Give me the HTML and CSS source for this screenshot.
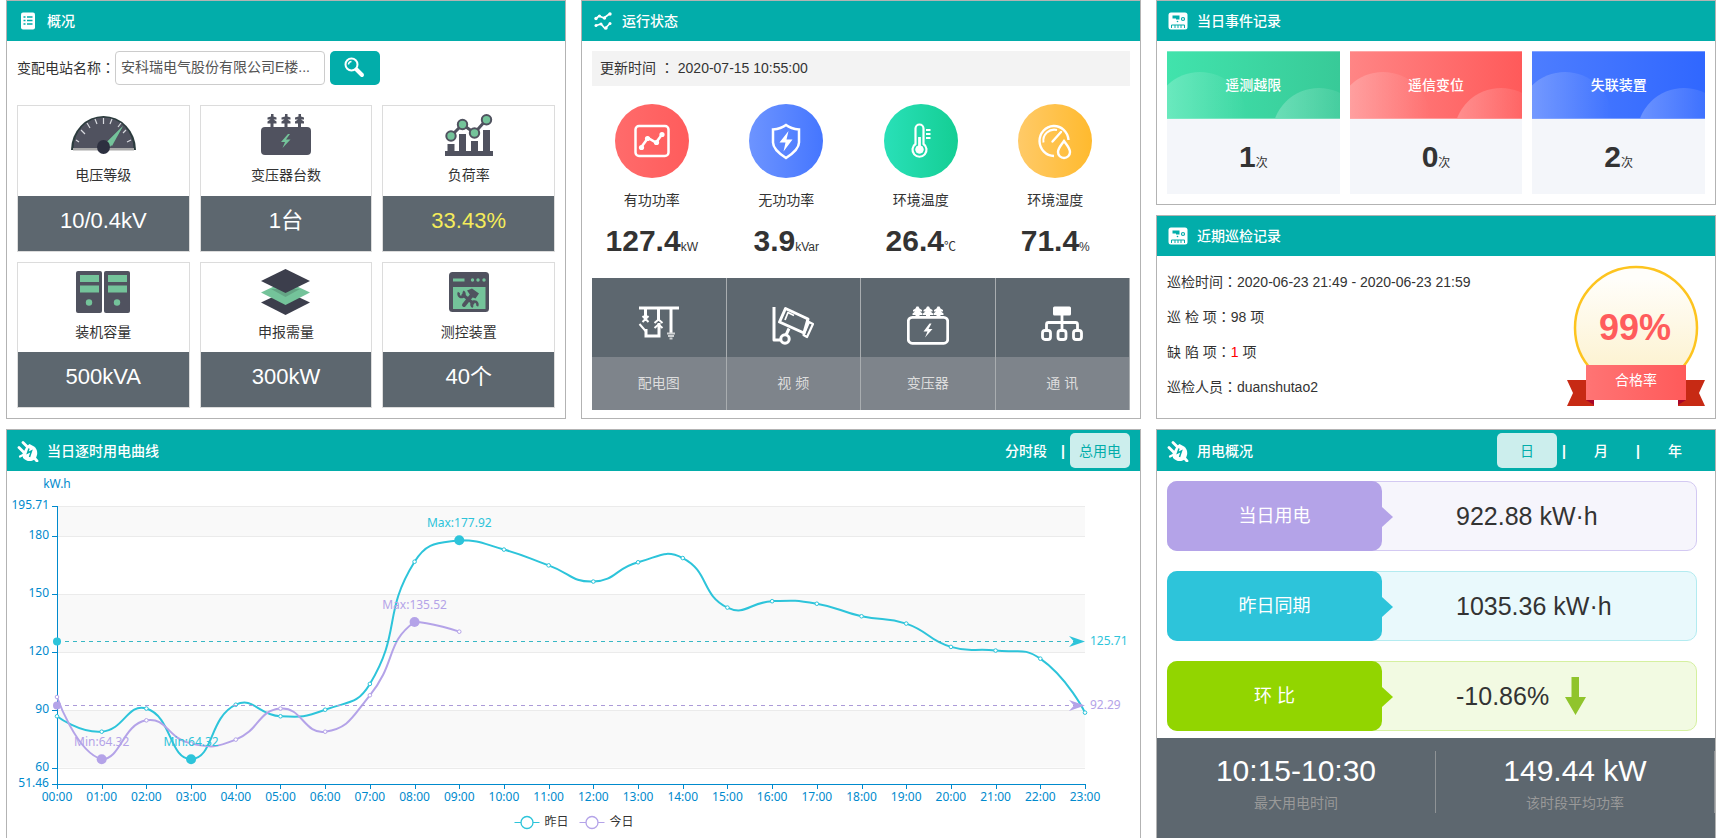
FILE: index.html
```html
<!DOCTYPE html>
<html lang="zh-CN">
<head>
<meta charset="utf-8">
<title>变配电站运行监控</title>
<link rel="stylesheet" href="styles.css">
</head>
<body>
<svg class="defs" width="0" height="0" aria-hidden="true">
  <symbol id="i-plug" viewBox="0 0 22 22">
    <g fill="none" stroke="#fff" stroke-linecap="round" stroke-width="2.800">
      <path d="M6 2.500l6.500 6.500M2 7.500l6.500 6.500M17 17.500l3 3.500"/>
      <path d="M3 16.500l4-2" stroke-width="2.200"/>
    </g>
    <path d="M9.500 6.500l3-2.500 4.500 2.500c4 3 4 8 1.500 12-4 4-9 3-12.500-.500l-.500-4z" fill="#fff"/>
    <path d="M12 8.500l-1.500 4.500 4-2-2 6" stroke="#02adaa" stroke-width="1.500" fill="none"/>
  </symbol>
  <symbol id="i-meter" viewBox="0 0 22 22">
    <rect x="1.500" y="2.500" width="19" height="17" rx="2.500" fill="#fff"/>
    <path d="M5.500 5.500h7v4h-3.500v-1h-3.500z" fill="#02adaa"/>
    <circle cx="16" cy="9" r="1.500" fill="none" stroke="#02adaa" stroke-width="1.200"/>
    <circle cx="10.500" cy="11.500" r=".8" fill="#02adaa"/>
    <path d="M4.500 18v-3h13v3M8 15v3M11 15v3M14 15v3" stroke="#02adaa" stroke-width="1" fill="none"/>
  </symbol>
</svg>

<main class="board">
  <section class="panel">
    <header class="bar">
      <svg class="bar-icon" viewBox="0 0 22 22"><rect x="4" y="2.500" width="14" height="17" rx="2" fill="#fff"/><path d="M6.500 7h2M6.500 10.500h2M6.500 14h2M10 7h5.500M10 10.500h5.500M10 14h5.500" stroke="#02adaa" stroke-width="1.500"/></svg>
      <h2>概况</h2>
    </header>
    <form class="search">
      <label for="station">变配电站名称<span class="colon" lang="zh-Hant">：</span></label>
      <select id="station"><option>安科瑞电气股份有限公司E楼...</option></select>
      <button type="button" aria-label="查询">
        <svg width="22" height="22" viewBox="0 0 22 22" fill="none" stroke="#fff"><circle cx="7.500" cy="7.500" r="6" stroke-width="2"/><path d="M4.500 7.500a3 3 0 0 1 3-3" stroke-width="1.500"/><path d="M12.500 12.500l5.500 5.500" stroke-width="4" stroke-linecap="round"/></svg>
      </button>
    </form>
    <div class="stats">
      <div class="stat">
        <svg width="65" height="42" viewBox="0 0 65 42">
          <path d="M0 36a32.500 34 0 0 1 65 0z" fill="#2b3b3d"/>
          <path d="M2.500 34.500a30 31 0 0 1 60 0z" fill="#50525f"/>
          <path d="M2 34h61v2.500h-61z" fill="#a9a9a9"/>
          <path d="M5 26l3 2M10 16l4 4M16 9l3 5M24 5l2 5M32.500 4v6M41 5l-2 5M50 9l-3 4M60 26l-4 2M55 16l-3 3" stroke="#d8dadf" stroke-width="1.200"/>
          <path d="M52 12l-11 20-5-4z" fill="#74c39a"/><path d="M52 12l-16 16-5 6 8-1z" fill="#74c39a"/>
          <ellipse cx="32.500" cy="33" rx="6.500" ry="7" fill="#2d3040"/>
        </svg>
        <p>电压等级</p><strong>10/0.4kV</strong>
      </div>
      <div class="stat">
        <svg width="50" height="42" viewBox="0 0 50 42" fill="#50525f">
          <rect x="0" y="13" width="50" height="28" rx="4"/>
          <path id="ins" d="M10 0h2.500v2.500l3 1v2h-3l3 2v2h-3v4h-3v-4h-3v-2l3-2h-3v-2l3.500-1z"/>
          <use href="#ins" x="14"/><use href="#ins" x="27.500"/>
          <path d="M27 20l-7 8h4l-2.500 6 8-8.500h-4.500l4-5.500z" fill="#74c39a"/>
        </svg>
        <p>变压器台数</p><strong>1台</strong>
      </div>
      <div class="stat">
        <svg width="48" height="42" viewBox="0 0 48 42">
          <path d="M0 37h48v5h-48zM2.500 30h7v8h-7zM14 20h7v18h-7zM26 27h7v11h-7zM38 16h7v22h-7z" fill="#50525f"/>
          <path d="M6 22l11.500-11.500L29.500 19l12-13.500" fill="none" stroke="#50525f" stroke-width="3"/>
          <g fill="#74c39a" stroke="#50525f" stroke-width="2"><circle cx="6" cy="22" r="4.700"/><circle cx="17.500" cy="10.500" r="4.700"/><circle cx="29.500" cy="19" r="4.700"/><circle cx="41.500" cy="5.700" r="4.700"/></g>
        </svg>
        <p>负荷率</p><strong class="warn">33.43%</strong>
      </div>
      <div class="stat">
        <svg width="54" height="42" viewBox="0 0 54 42">
          <g id="srv"><rect width="26" height="42" rx="2" fill="#50525f"/><path d="M4 4h19v7h-19zM4 14.500h19v7h-19z" fill="#74c39a"/><circle cx="13" cy="31.500" r="3.200" fill="#74c39a"/></g>
          <use href="#srv" x="28"/>
        </svg>
        <p>装机容量</p><strong>500kVA</strong>
      </div>
      <div class="stat">
        <svg class="tall" width="49" height="46" viewBox="0 0 49 46">
          <path d="M24.500 22L49 33.500 24.500 46 0 33.500z" fill="#3c3e4c"/>
          <path d="M24.500 12L49 23.500 24.500 36 0 23.500z" fill="#74c39a"/>
          <path d="M10 20h29L24.500 28z" fill="#64a585"/>
          <path d="M24.500 0L49 12 24.500 24 0 12z" fill="#3c3e4c"/>
        </svg>
        <p>申报需量</p><strong>300kW</strong>
      </div>
      <div class="stat">
        <svg width="40" height="40" viewBox="0 0 40 40">
          <rect width="40" height="40" rx="3.500" fill="#50525f"/>
          <path d="M4 6.500h11.500v3h-11.500zM4 15h32.500v22h-32.500z" fill="#74c39a"/>
          <g fill="#74c39a"><circle cx="23.500" cy="8" r="1.700"/><circle cx="29" cy="8" r="1.700"/><circle cx="35" cy="8" r="1.700"/></g>
          <path d="M13 22l12 10" stroke="#50525f" stroke-width="3"/>
          <path d="M23 23L15 33" stroke="#50525f" stroke-width="4" stroke-linecap="round"/>
          <path d="M18 18.500l5-2 7 5-3.500 5-4-1.500-2-3z" fill="#50525f"/>
          <path d="M10 20.500a3 3 0 1 0 4-1M28 34a3 3 0 1 0-4 1" fill="none" stroke="#50525f" stroke-width="2.500"/>
        </svg>
        <p>测控装置</p><strong>40个</strong>
      </div>
    </div>
  </section>

  <section class="panel">
    <header class="bar">
      <svg class="bar-icon" viewBox="0 0 22 22" fill="none" stroke="#fff" stroke-width="1.700"><path d="M4 8.500l3-2.500 5 2 6-4.500M4 15.500l5-1.500 4 4.500 5-5"/><g fill="#fff" stroke="none"><circle cx="4" cy="8.500" r="1.700"/><circle cx="7.500" cy="6" r="1.500"/><circle cx="12.500" cy="8" r="1.700"/><circle cx="18" cy="4" r="1.700"/><circle cx="4" cy="15.500" r="1.500"/><circle cx="9" cy="14" r="1.500"/><circle cx="14" cy="18" r="1.700"/><circle cx="18" cy="13.500" r="1.500"/></g></svg>
      <h2>运行状态</h2>
    </header>
    <p class="updated">更新时间 <span class="colon" lang="zh-Hant">：</span> 2020-07-15 10:55:00</p>
    <div class="gauges">
      <div class="gauge">
        <span class="disc red"><svg width="38" height="38" viewBox="0 0 38 38" fill="none" stroke="#fff" stroke-width="2.500"><rect x="2.500" y="4" width="33" height="30" rx="3.500"/><path d="M8 25.500l7-9.500 8 4.500 6-8"/><g fill="#fff" stroke="none"><circle cx="8.500" cy="25.500" r="2.600"/><circle cx="14.500" cy="16.500" r="2.600"/><circle cx="23.500" cy="20.500" r="2.600"/><circle cx="29" cy="12.500" r="2.600"/></g></svg></span>
        <p>有功功率</p><div class="num">127.4<small>kW</small></div>
      </div>
      <div class="gauge">
        <span class="disc blue"><svg width="38" height="38" viewBox="0 0 38 38"><path d="M19 3c4 3 8 4 13 4.500v13c0 6-6 11-13 15.500C12 31.500 6 26.500 6 20.500v-13C11 7 15 6 19 3z" fill="none" stroke="#fff" stroke-width="2.500"/><path d="M21.500 9L12.500 20.500h6L16.500 29.500 25.500 17.500h-6z" fill="#fff"/></svg></span>
        <p>无功功率</p><div class="num">3.9<small>kVar</small></div>
      </div>
      <div class="gauge">
        <span class="disc green"><svg width="38" height="38" viewBox="0 0 38 38" fill="none" stroke="#fff"><path d="M13.500 22V6.500a4 4 0 0 1 8 0V22a7 7 0 1 1-8 0z" stroke-width="2.200"/><circle cx="17.500" cy="27.500" r="3.800" fill="#fff"/><path d="M17.500 27V15" stroke-width="2.800"/><path d="M24 8h4.500M24 12h4.500M24 16h4.500" stroke-width="2"/></svg></span>
        <p>环境温度</p><div class="num">26.4<small>℃</small></div>
      </div>
      <div class="gauge">
        <span class="disc amber"><svg width="38" height="38" viewBox="0 0 38 38" fill="none" stroke="#fff" stroke-width="2.400"><path d="M32.500 18A14.500 15 0 1 0 18 34" /><path d="M7.500 20.500A11 11 0 0 1 21 8" stroke-width="2"/><path d="M16.500 19.500l8.500-9.500" stroke-linecap="round"/><path d="M28 19c3.500 5 6 7.500 6 11a6 6 0 0 1-12 0c0-3.500 2.500-6 6-11z"/></svg></span>
        <p>环境湿度</p><div class="num">71.4<small>%</small></div>
      </div>
    </div>
    <nav class="links">
      <a href="#diagram"><span class="pic"><svg width="42" height="40" viewBox="0 0 42 40" fill="none" stroke="#fff" stroke-width="3"><path d="M1 3h40"/><path d="M7.500 4v12M20.500 4v12M33 4v24M8 24v7h13V18"/><path d="M4.500 11l6 6M10.500 11l-6 6M1.500 19l6.500 7.500M16.500 18l4-3.500 4 3.500M16.500 23l4-3.500 4 3.500" stroke-width="2"/><path d="M29 28.500h8M30 31h6M31.500 33.500h3" stroke-width="2" stroke="#cfd2d4"/></svg></span><span class="cap">配电图</span></a>
      <a href="#video"><span class="pic"><svg width="42" height="40" viewBox="0 0 42 40" fill="none" stroke="#fff" stroke-width="3" stroke-linejoin="round"><path d="M2 2v33h6M17 23.500l-3 6.500"/><path d="M13.500 3.500L36 14 32 28 7.500 17z"/><path d="M13 15l3-7.500 6 3" stroke-width="1.800"/><path d="M37 17l4 2-6 13-3.500-2z" stroke-width="2.200"/><circle cx="13" cy="34" r="4.200"/></svg></span><span class="cap">视 频</span></a>
      <a href="#transformer"><span class="pic"><svg width="42" height="40" viewBox="0 0 42 40"><rect x="1.300" y="12.300" width="39.400" height="26" rx="4" fill="none" stroke="#fff" stroke-width="2.800"/><g fill="#fff"><path id="ins2" d="M9.500 1.500h2l1 2 2.500 1.500v1.500h-2l2.500 2v1.500h-3v2h-4v-2h-3v-1.500l2.500-2h-2V5l2.500-1.500z"/><use href="#ins2" x="10.500"/><use href="#ins2" x="21"/><path d="M22.500 18.500l-6 8h4l-2.500 6 7.500-8.500h-4l3-5.500z"/></g></svg></span><span class="cap">变压器</span></a>
      <a href="#network"><span class="pic"><svg width="42" height="40" viewBox="0 0 42 40" fill="none" stroke="#fff" stroke-width="2.800"><rect x="12" y="1.500" width="18" height="9" rx="1.500" fill="#fff" stroke="none"/><path d="M21 10v15M5.500 25v-5.500a2 2 0 0 1 2-2h27a2 2 0 0 1 2 2V25"/><rect x="1.500" y="25.500" width="8" height="9" rx="2.500"/><rect x="17" y="25.500" width="8" height="9" rx="2.500"/><rect x="32.500" y="25.500" width="8" height="9" rx="2.500"/></svg></span><span class="cap">通 讯</span></a>
    </nav>
  </section>

  <div class="stack">
    <section class="panel">
      <header class="bar"><svg class="bar-icon"><use href="#i-meter"/></svg><h2>当日事件记录</h2></header>
      <div class="events">
        <div class="event"><h3 class="green">遥测越限</h3><div class="num">1<small>次</small></div></div>
        <div class="event"><h3 class="red">遥信变位</h3><div class="num">0<small>次</small></div></div>
        <div class="event"><h3 class="blue">失联装置</h3><div class="num">2<small>次</small></div></div>
      </div>
    </section>
    <section class="panel grow">
      <header class="bar"><svg class="bar-icon"><use href="#i-meter"/></svg><h2>近期巡检记录</h2></header>
      <div class="patrol">
        <div class="lines">
          <p>巡检时间<span class="colon" lang="zh-Hant">：</span>2020-06-23 21:49 - 2020-06-23 21:59</p>
          <p>巡 检 项<span class="colon" lang="zh-Hant">：</span>98 项</p>
          <p>缺 陷 项<span class="colon" lang="zh-Hant">：</span><em>1</em> 项</p>
          <p>巡检人员<span class="colon" lang="zh-Hant">：</span>duanshutao2</p>
        </div>
        <svg class="medal" width="138" height="142" viewBox="0 0 138 142">
          <defs>
            <linearGradient id="gold" x2="0" y2="1"><stop offset=".1" stop-color="#fffefa"/><stop offset=".8" stop-color="#fdf3d3"/></linearGradient>
            <linearGradient id="rib"><stop stop-color="#ff7474"/><stop offset="1" stop-color="#ff5a5a"/></linearGradient>
          </defs>
          <circle cx="69" cy="63" r="61" fill="url(#gold)" stroke="#fdc41f" stroke-width="2.500"/>
          <path d="M0 115h27v26H0l6-13zM138 115h-27v26h27l-6-13z" fill="#c72a14"/>
          <path d="M19 135h8v5zM119 135h-8v5z" fill="#a80529"/>
          <path d="M19 100h100v35H19z" fill="url(#rib)"/>
          <text x="68" y="75" class="rate">99%</text>
          <text x="69" y="120" class="rate-cap">合格率</text>
        </svg>
      </div>
    </section>
  </div>

  <section class="panel wide">
    <header class="bar tall-bar">
      <svg class="bar-icon"><use href="#i-plug"/></svg><h2>当日逐时用电曲线</h2>
      <div class="tabs"><button type="button">分时段</button><i>|</i><button type="button" class="on">总用电</button></div>
    </header>
    <div id="chart" class="chart"></div>
  </section>

  <section class="panel usage">
    <header class="bar tall-bar">
      <svg class="bar-icon"><use href="#i-plug"/></svg><h2>用电概况</h2>
      <div class="tabs"><button type="button" class="on">日</button><i>|</i><button type="button">月</button><i>|</i><button type="button">年</button></div>
    </header>
    <div class="rows">
      <div class="row purple"><h3>当日用电</h3><p>922.88 kW·h</p></div>
      <div class="row cyan"><h3>昨日同期</h3><p>1035.36 kW·h</p></div>
      <div class="row lime"><h3>环 比</h3><p>-10.86% <svg width="21" height="38" viewBox="0 0 21 38"><path d="M6.500 0h7.500v20h7L10.500 38 0 20h6.500z" fill="#90c42c"/></svg></p></div>
    </div>
    <div class="peak">
      <div><b>10:15-10:30</b><span>最大用电时间</span></div>
      <div><b>149.44 kW</b><span>该时段平均功率</span></div>
    </div>
  </section>
</main>
<script src="chart.js"></script>
</body>
</html>
```
FILE: styles.css
```css
* { box-sizing: border-box; }
body, h2, h3, p { margin: 0; }
body {
  font: 14px/20px "Liberation Sans", "Noto Sans CJK SC", sans-serif;
  color: #333;
  background: #fff;
}
button, select { font: inherit; }
.defs { position: absolute; }
.colon { font-family: "Noto Sans CJK TC", sans-serif; line-height: 1; }

.board {
  display: grid;
  grid-template-columns: repeat(3, minmax(0, 1fr));
  grid-template-rows: auto 1fr;
  gap: 10px 15px;
  height: 100vh;
  padding: 0 1px 0 6px;
  overflow: hidden;
}
.panel { display: flex; flex-direction: column; border: 1px solid #b3b3b3; background: #fff; }
.wide { grid-column: span 2; border-bottom: 0; }
.usage { border-bottom: 0; }
.stack { display: flex; flex-direction: column; gap: 10px; }
.grow { flex: 1; }

.bar {
  display: flex;
  align-items: center;
  gap: 8px;
  height: 40px;
  padding: 0 10px;
  background: #02adaa;
  color: #fff;
}
.tall-bar { height: 41px; }
.bar-icon { width: 22px; height: 22px; }
.bar h2 { font-size: 14px; font-weight: 500; }
.tabs { display: flex; align-items: center; margin-left: auto; }
.tabs button {
  width: 60px;
  height: 35px;
  padding: 0;
  border: 0;
  border-radius: 5px;
  background: none;
  color: #fff;
  font-weight: 500;
}
.tabs .on { background: #cceeed; color: #02adaa; font-weight: 400; }
.tabs i { width: 14px; text-align: center; font-style: normal; font-weight: 700; }

.search { display: flex; align-items: center; padding: 10px 10px 0; }
.search select {
  width: 210px;
  height: 34px;
  margin-right: 5px;
  padding: 0 5px 2px;
  border: 1px solid #ccc;
  border-radius: 4px;
  appearance: none;
  background: #fff;
  color: #555;
}
.search button {
  display: flex;
  align-items: center;
  justify-content: center;
  width: 50px;
  height: 34px;
  padding: 0;
  border: 0;
  border-radius: 5px;
  background: #02adaa;
}

.stats {
  display: grid;
  flex: 1;
  grid-template-columns: repeat(3, minmax(0, 1fr));
  gap: 10px;
  padding: 20px 10px 10px;
}
.stat { display: flex; flex-direction: column; align-items: center; border: 1px solid #dcdcdc; }
.stat svg { margin-top: 8px; height: 42px; }
.stat .tall { height: 46px; margin: 6px 0 -2px; }
.stat p { flex: 1; margin-top: 9px; }
.stat strong {
  align-self: stretch;
  height: 55px;
  background: #5d676f;
  color: #fff;
  font-size: 22px;
  font-weight: 400;
  line-height: 50px;
  text-align: center;
}
.stat .warn { color: #f5ec5a; }

.updated { margin: 10px 10px 18px; padding: 0 8px; background: #f3f3f3; line-height: 35px; }
.gauges { display: grid; grid-template-columns: repeat(4, 1fr); padding: 0 10px; text-align: center; }
.gauge { padding-right: 15px; }
.gauge p { margin: 12px 0 13px; }
.disc { display: flex; align-items: center; justify-content: center; width: 74px; height: 74px; margin: 0 auto; border-radius: 50%; }
.disc.red { background: linear-gradient(90deg, #ff6b6b, #ff5c5c); }
.disc.blue { background: linear-gradient(90deg, #6d94ff, #4576ff); }
.disc.green { background: linear-gradient(90deg, #29e0b8, #14ce94); }
.disc.amber { background: linear-gradient(90deg, #ffca68, #ffba2e); }
.num { font-size: 30px; font-weight: 700; line-height: 36px; white-space: nowrap; }
.num small { font-size: 12px; font-weight: 400; line-height: 1; }

.links { display: grid; grid-template-columns: repeat(4, 1fr); margin: 19px 10px 8px; background: #5d676f; }
.links a { border-right: 1px solid #a9adb0; color: #ddd; text-align: center; text-decoration: none; }
.pic { display: flex; align-items: flex-end; justify-content: center; height: 79px; padding-bottom: 12px; }
.cap { display: block; background: #7e848b; line-height: 53px; }

.events { display: grid; grid-template-columns: repeat(3, minmax(0, 1fr)); gap: 10px; padding: 10px; }
.event { background: #f4f6fa; text-align: center; }
.event h3 {
  position: relative;
  overflow: hidden;
  border: solid rgba(255, 255, 255, .3);
  border-width: 1px 0;
  background-origin: border-box;
  color: #fff;
  font-size: 14px;
  font-weight: 500;
  line-height: 66px;
}
.event h3::before, .event h3::after {
  content: "";
  position: absolute;
  width: 94px;
  height: 94px;
  border-radius: 50%;
  background: linear-gradient(90deg, rgba(255, 255, 255, .25), rgba(255, 255, 255, 0));
}
.event h3::before { top: 20px; left: -14px; }
.event h3::after { top: 36px; right: -26px; }
.event .green { background-image: linear-gradient(90deg, #41e3ac, #38ca98); }
.event .red { background-image: linear-gradient(90deg, #ff8585, #ff5a5a); }
.event .blue { background-image: linear-gradient(90deg, #4d7dff, #3067ff); }
.event .num { padding: 20px 0 19px; }

.patrol { display: flex; justify-content: space-between; padding: 9px 10px 0; }
.patrol p { line-height: 35px; }
.patrol em { color: #f00; font-style: normal; }
.rate { fill: #ff5c5c; font-size: 36px; font-weight: 700; text-anchor: middle; }
.rate-cap { fill: #fff; font-size: 14px; text-anchor: middle; }

.chart { flex: 1; min-height: 0; }
.chart svg { display: block; }
.chart text { font-family: "Noto Sans", "Noto Sans CJK SC", sans-serif; font-size: 12px; }

.rows { display: grid; gap: 20px; padding: 10px 18px 7px 10px; }
.row { display: flex; height: 70px; border: 1px solid; border-radius: 10px; }
.row h3 {
  position: relative;
  width: 215px;
  margin: -1px;
  border-radius: 10px;
  color: #fff;
  font-size: 18px;
  font-weight: 400;
  line-height: 70px;
  text-align: center;
}
.row h3::after {
  content: "";
  position: absolute;
  top: 26px;
  left: 100%;
  border: solid transparent;
  border-width: 10px 0 10px 11px;
}
.row p { display: flex; align-items: center; gap: 16px; padding-left: 75px; font-size: 25px; }
.purple { border-color: #d3c9f2; background: #f6f5fc; }
.purple h3 { background: #b4a3e8; }
.purple h3::after { border-left-color: #b4a3e8; }
.cyan { border-color: #b3ebf0; background: #e9f9fc; }
.cyan h3 { background: #2dc4da; }
.cyan h3::after { border-left-color: #2dc4da; }
.lime { border-color: #d5f0a0; background: #f2fae2; }
.lime h3 { background: #92d500; }
.lime h3::after { border-left-color: #92d500; }

.peak { display: grid; flex: 1; grid-template-columns: 1fr 1fr; align-items: start; padding-top: 13px; background: #5d676f; text-align: center; }
.peak div { height: 62px; border-right: 1px solid #8f9396; }
.peak b { display: block; color: #fff; font-size: 30px; font-weight: 400; line-height: 40px; }
.peak span { display: block; color: #999; line-height: 24px; }
```
FILE: chart.js
```js
const TEAL = '#2dc4da', PURPLE = '#b4a3e8', AXIS = '#008acd';
const yesterday = [86.6, 78.6, 90.6, 64.32, 92.6, 86.6, 90, 103.4, 166.8, 177.92, 173.1, 164.9,
  156.5, 166.5, 168.7, 143, 146.3, 145, 138.5, 134.7, 122.6, 120.7, 116.5, 88.5];
const today = [96.6, 64.32, 84.5, 72.4, 74.5, 90.6, 78.6, 97.5, 135.52, 130.5];
const MIN = 51.46, MAX = 195.71;
const host = document.getElementById('chart');

function draw() {
  const W = host.clientWidth, H = host.clientHeight;
  const left = 50, right = W - 55, top = 35, bottom = 313;
  const X = i => left + (right - left) * i / 23;
  const Y = v => bottom - (v - MIN) / (MAX - MIN) * (bottom - top);
  const crisp = n => Math.round(n) + 0.5;
  let out = '';
  const text = (x, y, s, color, anchor) =>
    out += `<text x="${x}" y="${y}" fill="${color}" text-anchor="${anchor}">${s}</text>`;
  const line = (x1, y1, x2, y2, color, extra = '') =>
    out += `<path d="M${x1} ${y1}L${x2} ${y2}" stroke="${color}" ${extra}/>`;

  const ticks = [MAX, 180, 150, 120, 90, 60, MIN];
  ticks.slice(0, -1).forEach((v, i) => {
    const y = crisp(Y(v));
    if (i % 2 === 0) out += `<rect x="${left}" y="${y}" width="${right - left}" height="${Y(ticks[i + 1]) - y}" fill="#f9f9f9"/>`;
  });
  ticks.slice(0, -1).forEach(v => line(left, crisp(Y(v)), right, crisp(Y(v)), '#ebebeb'));
  ticks.forEach(v => {
    line(left - 5, crisp(Y(v)), left, crisp(Y(v)), AXIS);
    text(left - 8, Math.round(Y(v)) + 3, v, AXIS, 'end');
  });
  line(left + 0.5, top, left + 0.5, bottom, AXIS);
  line(left, bottom + 0.5, right, bottom + 0.5, AXIS);
  for (let i = 0; i < 24; i++) {
    line(crisp(X(i)), bottom, crisp(X(i)), bottom + 5, AXIS);
    text(X(i), bottom + 17, String(i).padStart(2, '0') + ':00', AXIS, 'middle');
  }
  text(left, 17, 'kW.h', AXIS, 'middle');

  function curve(data, color) {
    const p = data.map((v, i) => [X(i), Y(v)]);
    const ceil = Y(Math.max(...data)), floor = Y(Math.min(...data));
    const clamp = y => Math.min(floor, Math.max(ceil, y));
    const cps = p.map((c, i) => {
      const a = p[i - 1], b = p[i + 1];
      if (!a || !b) return [c, c];
      const d0 = Math.hypot(c[0] - a[0], c[1] - a[1]), d1 = Math.hypot(c[0] - b[0], c[1] - b[1]);
      const vx = (b[0] - a[0]) * 0.5, vy = (b[1] - a[1]) * 0.5, r = d0 / (d0 + d1);
      return [[c[0] - vx * r, clamp(c[1] - vy * r)], [c[0] + vx * (1 - r), clamp(c[1] + vy * (1 - r))]];
    });
    let d = `M${p[0]}`;
    for (let i = 1; i < p.length; i++) d += `C${cps[i - 1][1]} ${cps[i][0]} ${p[i]}`;
    out += `<path d="${d}" fill="none" stroke="${color}" stroke-width="2"/>`;
    p.forEach(q => out += `<circle cx="${q[0]}" cy="${q[1]}" r="1.8" fill="#fff" stroke="${color}" stroke-width="1"/>`);
  }
  function mark(data, fn, name, color) {
    const v = fn(...data), i = data.indexOf(v);
    out += `<circle cx="${X(i)}" cy="${Y(v)}" r="5" fill="${color}"/>`;
    text(X(i), Y(v) - 13, `${name}:${v}`, color, 'middle');
  }
  function average(v, color, dash) {
    const y = crisp(Y(v));
    line(left, y, right - 10, y, dash, 'stroke-dasharray="4 4"');
    out += `<circle cx="${left}" cy="${y}" r="4" fill="${color}"/>`;
    out += `<path d="M${right} ${y}l-16 -5.500l5 5.500l-5 5.500z" fill="${color}"/>`;
    text(right + 5, y + 3, v, color, 'start');
  }
  curve(yesterday, TEAL);
  curve(today, PURPLE);
  average(125.71, TEAL, '#38b7c4');
  average(92.29, PURPLE, '#ab9ad8');
  mark(yesterday, Math.max, 'Max', TEAL);
  mark(yesterday, Math.min, 'Min', TEAL);
  mark(today, Math.max, 'Max', PURPLE);
  mark(today, Math.min, 'Min', PURPLE);

  const mid = W / 2;
  [['昨日', TEAL, mid - 59], ['今日', PURPLE, mid + 6]].forEach(([name, color, x]) => {
    line(x, 351.5, x + 25, 351.5, color);
    out += `<circle cx="${x + 12.500}" cy="351.5" r="6" fill="#fff" stroke="${color}" stroke-width="1.300"/>`;
    text(x + 30, 355, name, '#333', 'start');
  });
  host.innerHTML = `<svg width="${W}" height="${H}">${out}</svg>`;
}
draw();
window.addEventListener('resize', () => { host.innerHTML = ''; draw(); });
```
